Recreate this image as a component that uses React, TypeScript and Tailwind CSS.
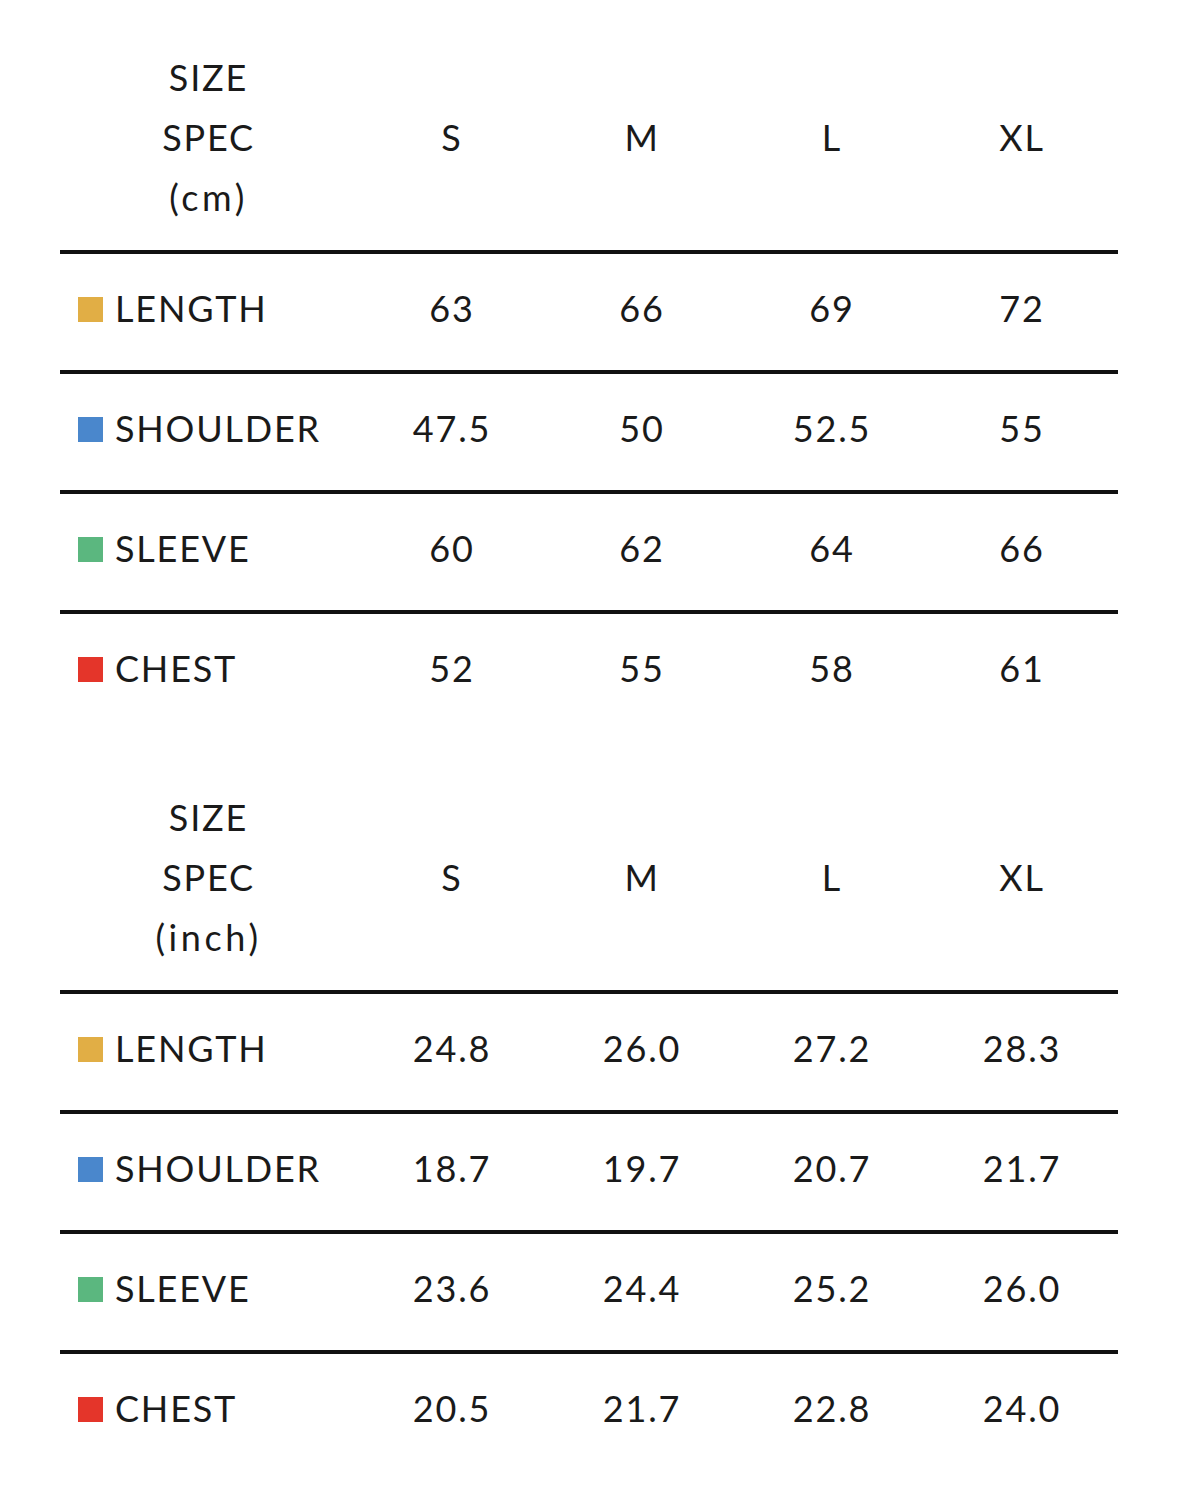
import React from "react";

type Row = { label: string; color: string; values: string[] };

const colors = {
  yellow: "bg-[#e1ae45]",
  blue: "bg-[#4a87cc]",
  green: "bg-[#5bb77f]",
  red: "bg-[#e4352a]",
};

const cmRows: Row[] = [
  { label: "LENGTH", color: colors.yellow, values: ["63", "66", "69", "72"] },
  { label: "SHOULDER", color: colors.blue, values: ["47.5", "50", "52.5", "55"] },
  { label: "SLEEVE", color: colors.green, values: ["60", "62", "64", "66"] },
  { label: "CHEST", color: colors.red, values: ["52", "55", "58", "61"] },
];

const inchRows: Row[] = [
  { label: "LENGTH", color: colors.yellow, values: ["24.8", "26.0", "27.2", "28.3"] },
  { label: "SHOULDER", color: colors.blue, values: ["18.7", "19.7", "20.7", "21.7"] },
  { label: "SLEEVE", color: colors.green, values: ["23.6", "24.4", "25.2", "26.0"] },
  { label: "CHEST", color: colors.red, values: ["20.5", "21.7", "22.8", "24.0"] },
];

const sizes = ["S", "M", "L", "XL"];

function Table({ unit, rows }: { unit: string; rows: Row[] }) {
  return (
    <div className="w-[1058px] ml-[60px]">
      <div className="h-[250px] pt-[47px]">
        <div className="grid grid-cols-[297px_190px_190px_190px_190px] items-center h-[180px]">
          <div className="flex flex-col items-center leading-[60px]">
            <span>SIZE</span>
            <span>SPEC</span>
            <span className="tracking-[0.1em]">{unit}</span>
          </div>
          {sizes.map((s) => (
            <div key={s} className="text-center">
              {s}
            </div>
          ))}
        </div>
      </div>
      {rows.map((r) => (
        <div
          key={r.label}
          className="grid grid-cols-[297px_190px_190px_190px_190px] items-center h-[120px] pb-[8px] border-t-4 border-[#111111]"
        >
          <div className="flex items-center pl-[18px] gap-[12px]">
            <span className={`w-[25px] h-[25px] mt-[2px] ${r.color}`} />
            <span>{r.label}</span>
          </div>
          {r.values.map((v, i) => (
            <div key={i} className="text-center">
              {v}
            </div>
          ))}
        </div>
      ))}
    </div>
  );
}

export default function App() {
  return (
    <div
      className="w-[1179px] h-[1495px] bg-white text-[#1a1a1a] text-[36px] font-normal tracking-[0.05em] overflow-hidden"
      style={{ fontFamily: "Lato, 'Noto Sans', sans-serif" }}
    >
      <Table unit="(cm)" rows={cmRows} />
      <div className="h-[10px]" />
      <Table unit="(inch)" rows={inchRows} />
    </div>
  );
}
